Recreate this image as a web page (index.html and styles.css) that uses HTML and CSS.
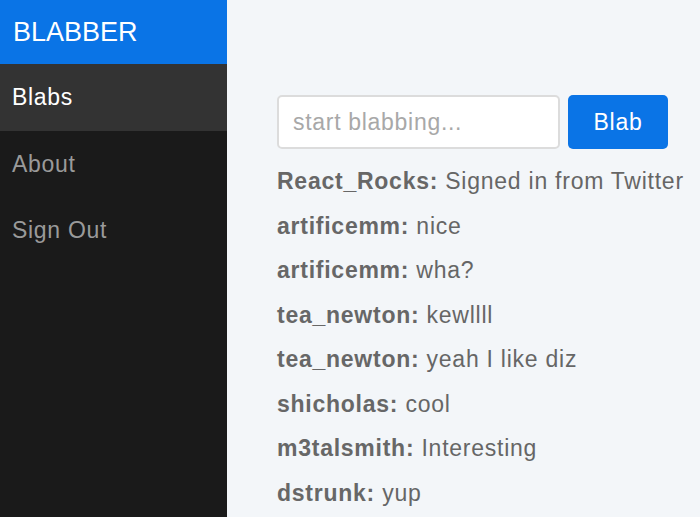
FILE: index.html
```html
<!DOCTYPE html>
<html>
<head>
<meta charset="utf-8">
<link rel="stylesheet" href="styles.css">
</head>
<body>
<div class="app">
  <aside class="sidebar">
    <div class="brand">BLABBER</div>
    <nav class="nav">
      <div class="nav-item active">Blabs</div>
      <div class="nav-item">About</div>
      <div class="nav-item">Sign Out</div>
    </nav>
  </aside>
  <main class="main">
    <form class="composer">
      <input class="composer-input" type="text" placeholder="start blabbing...">
      <button class="composer-btn" type="button">Blab</button>
    </form>
    <ul class="blabs">
      <li class="blab"><b>React_Rocks:</b> Signed in from Twitter</li>
      <li class="blab"><b>artificemm:</b> nice</li>
      <li class="blab"><b>artificemm:</b> wha?</li>
      <li class="blab"><b>tea_newton:</b> kewllll</li>
      <li class="blab"><b>tea_newton:</b> yeah I like diz</li>
      <li class="blab"><b>shicholas:</b> cool</li>
      <li class="blab"><b>m3talsmith:</b> Interesting</li>
      <li class="blab"><b>dstrunk:</b> yup</li>
    </ul>
  </main>
</div>
</body>
</html>
```

FILE: styles.css
```css
html, body {
  margin: 0;
  padding: 0;
  height: 100%;
  overflow: hidden;
}
body {
  font-family: "Liberation Sans", Arial, sans-serif;
  background: #f3f6f9;
}
.app {
  display: flex;
  height: 517px;
}
.sidebar {
  width: 227px;
  flex: none;
  background: #1a1a1a;
  display: flex;
  flex-direction: column;
}
.brand {
  height: 64px;
  background: #0a74e6;
  color: #fff;
  font-size: 27px;
  display: flex;
  align-items: center;
  padding-left: 13px;
  box-sizing: border-box;
}
.nav {
  display: flex;
  flex-direction: column;
}
.nav-item {
  height: 66px;
  display: flex;
  align-items: center;
  padding-left: 12px;
  font-size: 23px;
  letter-spacing: 0.7px;
  color: #9a9a9a;
}
.nav-item.active {
  height: 67px;
  background: #333;
  color: #fff;
}
.main {
  flex: 1;
  padding: 95px 0 0 50px;
  background: #f3f6f9;
}
.composer {
  display: flex;
  gap: 8px;
  margin: 0 0 19px;
}
.composer-input {
  width: 283px;
  height: 54px;
  box-sizing: border-box;
  border: 2px solid #dcdcdc;
  border-radius: 5px;
  background: #fff;
  padding: 0 14px;
  font-family: inherit;
  font-size: 23px;
  letter-spacing: 0.7px;
  color: #555;
  outline: none;
}
.composer-input::placeholder {
  color: #a8a8a8;
}
.composer-btn {
  width: 100px;
  height: 54px;
  border: none;
  border-radius: 5px;
  background: #0a74e6;
  color: #fff;
  font-family: inherit;
  font-size: 23px;
  letter-spacing: 0.7px;
  padding: 0;
}
.blabs {
  list-style: none;
  margin: 0;
  padding: 0;
}
.blab {
  font-size: 23px;
  letter-spacing: 0.75px;
  line-height: 26.5px;
  margin-bottom: 18px;
  color: #666;
  white-space: nowrap;
}
.blab b {
  color: #676767;
}
```
